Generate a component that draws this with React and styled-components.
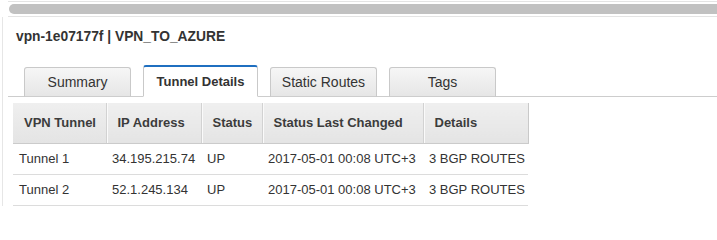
import React from "react";
import styled, { createGlobalStyle } from "styled-components";

const Global = createGlobalStyle`
  html, body { margin: 0; padding: 0; background: #fff; }
  body { font-family: "Liberation Sans", Helvetica, Arial, sans-serif; color: #333; }
  * { box-sizing: border-box; }
`;

const Page = styled.div`
  width: 717px;
  height: 206px;
  overflow: hidden;
  background: #fff;
  display: flex;
  flex-direction: column;
`;

const ScrollTrack = styled.div`
  margin: 1px 0 0 8px;
  height: 16px;
  border-top: 1px solid #e4e4e4;
  border-bottom: 1px solid #e4e4e4;
  padding: 2px 0 2px 1px;
  display: flex;
`;

const ScrollThumb = styled.div`
  flex: 1;
  height: 10px;
  margin-right: -10px;
  border-radius: 5px;
  background: #c1c1c1;
`;

const Panel = styled.div`
  flex: 1;
  margin-left: 2px;
  border-left: 1px solid #e6e6e6;
  display: flex;
  flex-direction: column;
`;

const Title = styled.h1`
  margin: 12px 0 0 13px;
  font-size: 13.8px;
  line-height: 16px;
  font-weight: bold;
  color: #333;
`;

const TabBar = styled.div`
  margin: 20px 0 0 5px;
  padding-left: 16px;
  height: 32px;
  display: flex;
  align-items: flex-end;
  gap: 12px;
  border-bottom: 1px solid #cdcdcd;
`;

const Tab = styled.div`
  margin-bottom: -1px;
  width: ${(p) => (p.$active ? "115px" : "107px")};
  height: ${(p) => (p.$active ? "32px" : "30px")};
  display: flex;
  align-items: center;
  justify-content: center;
  font-size: ${(p) => (p.$active ? "13px" : "14px")};
  font-weight: ${(p) => (p.$active ? "bold" : "normal")};
  color: #333;
  border: 1px solid #c9c9c9;
  border-top: ${(p) => (p.$active ? "2px solid #1f6fc0" : "1px solid #c9c9c9")};
  border-bottom: ${(p) => (p.$active ? "1px solid #fff" : "1px solid #cdcdcd")};
  border-radius: 3px 3px 0 0;
  background: ${(p) =>
    p.$active ? "#fff" : "linear-gradient(#f6f6f6, #e6e6e6)"};
`;

const Table = styled.table`
  margin: 6px 0 0 10px;
  width: 515px;
  border-collapse: collapse;
  table-layout: fixed;
  font-size: 13px;
`;

const HeadCell = styled.th`
  height: 40px;
  padding: 0 0 0 11px;
  text-align: left;
  font-weight: bold;
  color: #3c3c3c;
  white-space: nowrap;
  background: linear-gradient(#efefef, #e4e4e4);
  border-bottom: 1px solid #cbcbcb;
  border-right: 1px solid ${(p) => (p.$last ? "#c9c9c9" : "#d2d2d2")};
  box-shadow: ${(p) => (p.$first ? "none" : "inset 1px 0 #fafafa")};
`;

const Cell = styled.td`
  height: 31px;
  padding: 0 0 0 6px;
  color: #333;
  white-space: nowrap;
  border-bottom: 1px solid #dcdcdc;
`;

const columns = [
  { label: "VPN Tunnel", width: 93 },
  { label: "IP Address", width: 95 },
  { label: "Status", width: 61 },
  { label: "Status Last Changed", width: 161 },
  { label: "Details", width: 105 },
];

const rows = [
  ["Tunnel 1", "34.195.215.74", "UP", "2017-05-01 00:08 UTC+3", "3 BGP ROUTES"],
  ["Tunnel 2", "52.1.245.134", "UP", "2017-05-01 00:08 UTC+3", "3 BGP ROUTES"],
];

const tabs = ["Summary", "Tunnel Details", "Static Routes", "Tags"];

export default function App() {
  return (
    <Page>
      <Global />
      <ScrollTrack>
        <ScrollThumb />
      </ScrollTrack>
      <Panel>
        <Title>vpn-1e07177f | VPN_TO_AZURE</Title>
        <TabBar>
          {tabs.map((t) => (
            <Tab key={t} $active={t === "Tunnel Details"}>
              {t}
            </Tab>
          ))}
        </TabBar>
        <Table>
          <colgroup>
            {columns.map((c) => (
              <col key={c.label} style={{ width: c.width }} />
            ))}
          </colgroup>
          <thead>
            <tr>
              {columns.map((c, i) => (
                <HeadCell key={c.label} $first={i === 0} $last={i === columns.length - 1}>
                  {c.label}
                </HeadCell>
              ))}
            </tr>
          </thead>
          <tbody>
            {rows.map((r) => (
              <tr key={r[0]}>
                {r.map((v, i) => (
                  <Cell key={i}>{v}</Cell>
                ))}
              </tr>
            ))}
          </tbody>
        </Table>
      </Panel>
    </Page>
  );
}
